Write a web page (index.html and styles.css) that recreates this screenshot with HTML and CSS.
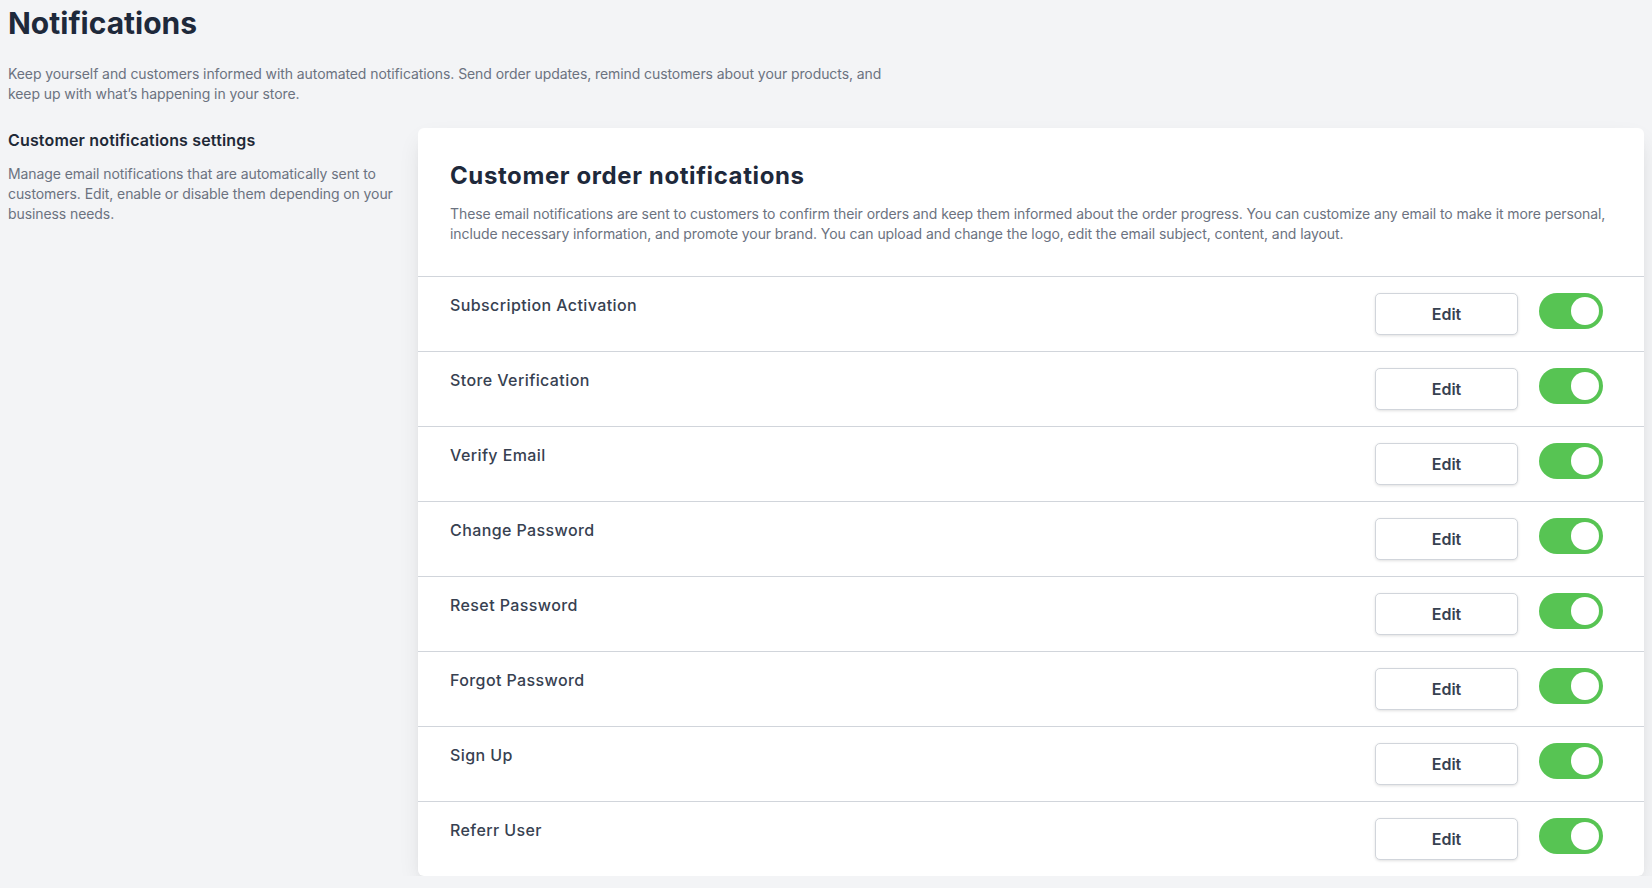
FILE: index.html
```html
<!DOCTYPE html>
<html lang="en">
<head>
<meta charset="utf-8">
<title>Notifications</title>
<link rel="stylesheet" href="styles.css">
</head>
<body>
<div class="page">
  <h1 class="page-title">Notifications</h1>
  <p class="page-desc">Keep yourself and customers informed with automated notifications. Send order updates, remind customers about your products, and keep up with what’s happening in your store.</p>

  <div class="layout">
    <aside class="side">
      <h2 class="side-title">Customer notifications settings</h2>
      <p class="side-desc">Manage email notifications that are automatically sent to customers. Edit, enable or disable them depending on your business needs.</p>
    </aside>

    <section class="card">
      <header class="card-head">
        <h3 class="card-title">Customer order notifications</h3>
        <p class="card-desc">These email notifications are sent to customers to confirm their orders and keep them informed about the order progress. You can customize any email to make it more personal, include necessary information, and promote your brand. You can upload and change the logo, edit the email subject, content, and layout.</p>
      </header>
      <ul class="rows">
        <li class="row"><span class="row-label">Subscription Activation</span><div class="actions"><button class="edit-btn">Edit</button><span class="toggle"><span class="knob"></span></span></div></li>
        <li class="row"><span class="row-label">Store Verification</span><div class="actions"><button class="edit-btn">Edit</button><span class="toggle"><span class="knob"></span></span></div></li>
        <li class="row"><span class="row-label">Verify Email</span><div class="actions"><button class="edit-btn">Edit</button><span class="toggle"><span class="knob"></span></span></div></li>
        <li class="row"><span class="row-label">Change Password</span><div class="actions"><button class="edit-btn">Edit</button><span class="toggle"><span class="knob"></span></span></div></li>
        <li class="row"><span class="row-label">Reset Password</span><div class="actions"><button class="edit-btn">Edit</button><span class="toggle"><span class="knob"></span></span></div></li>
        <li class="row"><span class="row-label">Forgot Password</span><div class="actions"><button class="edit-btn">Edit</button><span class="toggle"><span class="knob"></span></span></div></li>
        <li class="row"><span class="row-label">Sign Up</span><div class="actions"><button class="edit-btn">Edit</button><span class="toggle"><span class="knob"></span></span></div></li>
        <li class="row"><span class="row-label">Referr User</span><div class="actions"><button class="edit-btn">Edit</button><span class="toggle"><span class="knob"></span></span></div></li>
      </ul>
    </section>
  </div>
</div>
</body>
</html>
```

FILE: styles.css
```css
* { box-sizing: border-box; }

html, body {
  margin: 0;
  padding: 0;
  background: #f3f4f6;
  font-family: Inter, "Noto Sans", sans-serif;
  color: #1f2937;
  overflow: hidden;
}

.page {
  padding: 5px 8px 0 8px;
}

.page-title {
  margin: 0;
  font-size: 30px;
  line-height: 36px;
  font-weight: 700;
  color: #1e293b;
}

.page-desc {
  margin: 23px 0 0 0;
  max-width: 896px;
  font-size: 14px;
  line-height: 20px;
  letter-spacing: -0.006em;
  color: #6b7280;
}

.layout {
  display: grid;
  grid-template-columns: 410px 1fr;
  margin-top: 24px;
}

.side {
  padding: 0 16px 0 0;
}

.side-title {
  margin: 0;
  font-size: 16px;
  line-height: 24px;
  font-weight: 600;
  letter-spacing: 0.01em;
  color: #1f2937;
}

.side-desc {
  margin: 12px 0 0 0;
  font-size: 14px;
  line-height: 20px;
  letter-spacing: -0.006em;
  color: #6b7280;
}

.card {
  background: #ffffff;
  border-radius: 6px;
  box-shadow: 0 10px 25px -5px rgba(0, 0, 0, 0.12), 0 8px 10px -6px rgba(0, 0, 0, 0.08);
}

.card-head {
  padding: 32px 32px 32px 32px;
  border-bottom: 1px solid #d1d5db;
}

.card-title {
  margin: 0;
  font-size: 24px;
  line-height: 32px;
  font-weight: 700;
  letter-spacing: 0.025em;
  color: #1e293b;
}

.card-desc {
  margin: 12px 0 0 0;
  font-size: 14px;
  line-height: 20px;
  letter-spacing: -0.006em;
  color: #6b7280;
}

.rows {
  list-style: none;
  margin: 0;
  padding: 0;
}

.row {
  display: flex;
  align-items: flex-start;
  justify-content: space-between;
  padding: 16px 32px;
  border-bottom: 1px solid #d1d5db;
}

.row:last-child {
  border-bottom: none;
}

.row-label {
  font-size: 16px;
  line-height: 24px;
  font-weight: 500;
  color: #374151;
  letter-spacing: 0.025em;
}

.actions {
  display: flex;
  align-items: flex-start;
  gap: 21px;
  margin-right: 9px;
}

.edit-btn {
  width: 143px;
  padding: 8px 16px;
  font-family: inherit;
  font-size: 16px;
  line-height: 24px;
  font-weight: 600;
  color: #374151;
  background: #ffffff;
  border: 1px solid #d1d5db;
  border-radius: 5px;
  box-shadow: 0 1px 3px rgba(0, 0, 0, 0.12);
  cursor: pointer;
}

.toggle {
  display: flex;
  justify-content: flex-end;
  width: 64px;
  height: 36px;
  padding: 4px;
  border-radius: 18px;
  background: #57c453;
}

.knob {
  width: 28px;
  height: 28px;
  border-radius: 50%;
  background: #ffffff;
}
```
